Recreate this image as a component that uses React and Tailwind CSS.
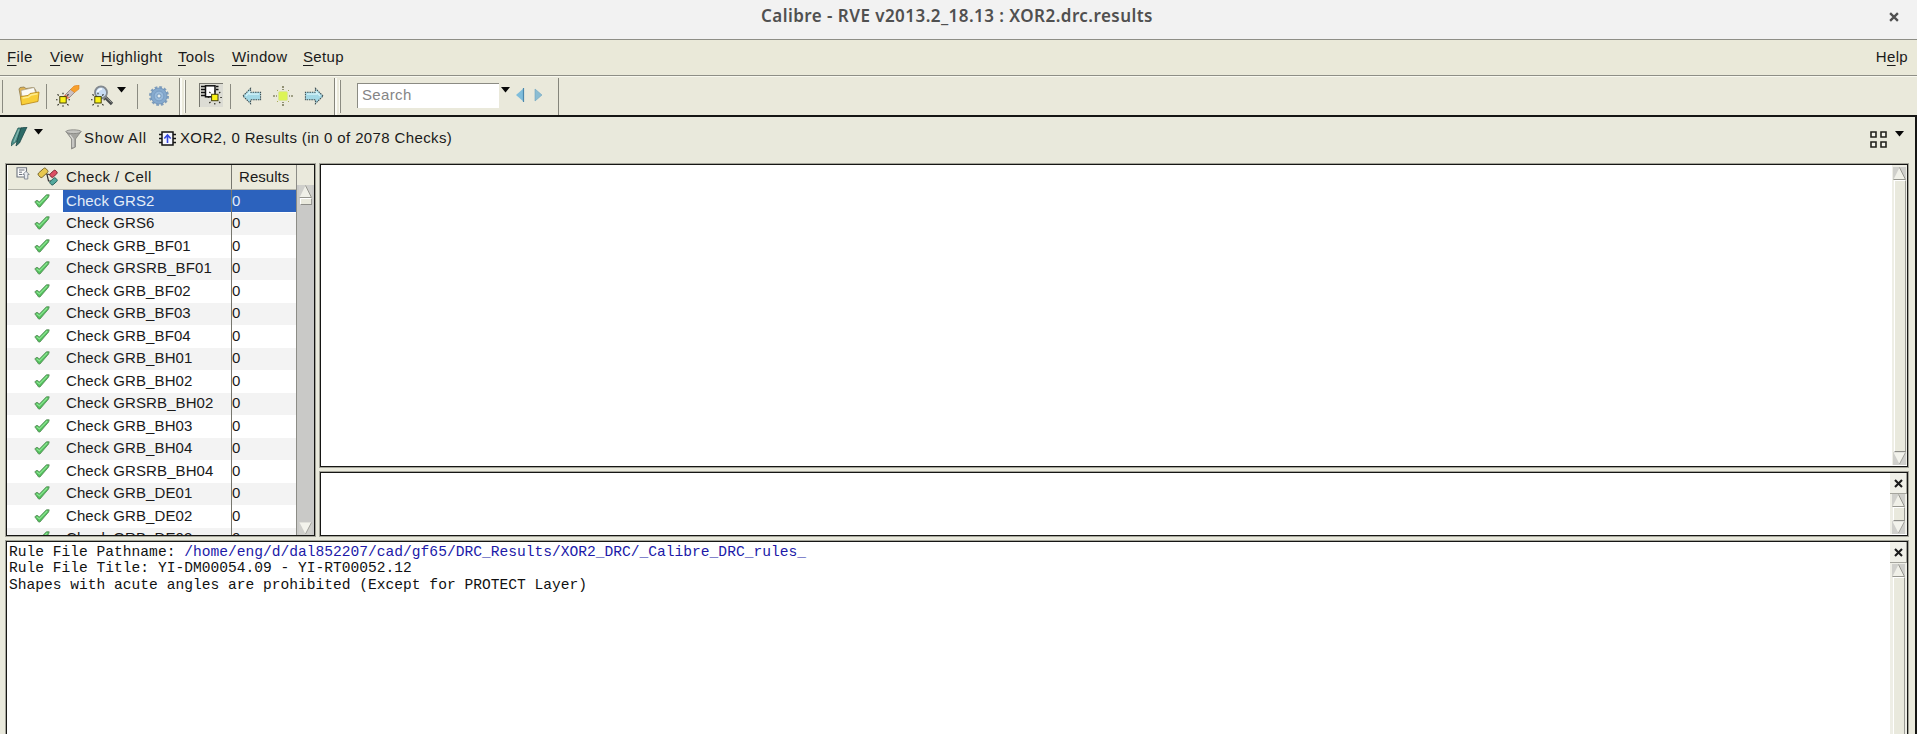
import React from "react";

const checks = [
  "GRS2", "GRS6", "GRB_BF01", "GRSRB_BF01", "GRB_BF02", "GRB_BF03", "GRB_BF04", "GRB_BH01",
  "GRB_BH02", "GRSRB_BH02", "GRB_BH03", "GRB_BH04", "GRSRB_BH04", "GRB_DE01", "GRB_DE02", "GRB_DE03",
];

const Folder = ({ className }) => (
  <svg className={className} width="22" height="20" viewBox="0 0 22 20">
    <path d="M1 3 L2 1.5 L6 1 L8 2.5 L16 1.5 L18 5 L18 14 L4 18.5 Z" fill="#dfb353" stroke="#8f7b4c" strokeWidth=".8" />
    <path d="M3 4.5 L16 1.5 L18 8 L4 11 Z" fill="#fbfaf4" stroke="#aaa48f" strokeWidth=".7" />
    <path d="M3.5 19 L2.5 10.5 L10 9.5 L12 7.5 L21 6 L20 15.5 Z" fill="#f8ce38" stroke="#b68418" strokeWidth=".8" />
    <path d="M4.5 12 L10.5 11 L13 9 L19.5 7.8" fill="none" stroke="#fdec8f" strokeWidth="1.5" />
  </svg>
);

const Glow = ({ x, y }) => (
  <g>
    <path
      d={`M${x - 7} ${y}h1.5M${x + 5.5} ${y}h1.5M${x} ${y - 7}v1.5M${x} ${y + 5.5}v1.5M${x - 5.5} ${y - 5.5}l1.2 1.2M${x + 5.5} ${y - 5.5}l-1.2 1.2M${x - 5.5} ${y + 5.5}l1.2 -1.2M${x + 5.5} ${y + 5.5}l-1.2 -1.2`}
      stroke="#26261c" strokeWidth="1.1"
    />
    <rect x={x - 3.2} y={y - 3.2} width="6.4" height="6.4" fill="#fbf316" stroke="#45430f" strokeWidth="1" />
  </g>
);

const Eraser = ({ className }) => (
  <svg className={className} width="24" height="22" viewBox="0 0 24 22">
    <path d="M9 10 L15 4 L19 7 L13 13 Z" fill="#c9bfc2" stroke="#85746f" strokeWidth=".7" />
    <path d="M14.5 4.5 L18 1 L23 0 L23 4 L18.5 7.5 Z" fill="#f7a02c" stroke="#dc7f20" strokeWidth=".6" />
    <path d="M7 11.5 L9.5 9.5 L13.5 13 L10 14.5 Z" fill="#e9755a" />
    <Glow x={7} y={14.8} />
  </svg>
);

const Magnifier = ({ className }) => (
  <svg className={className} width="24" height="22" viewBox="0 0 24 22">
    <path d="M14 12 L21 19" stroke="#46494a" strokeWidth="3.2" />
    <path d="M13.5 11 L20.5 17.5" stroke="#9b9d98" strokeWidth="1" />
    <circle cx="10" cy="7.5" r="6" fill="#c8dcf2" stroke="#83898f" strokeWidth="1.8" />
    <path d="M6.5 7 Q7.5 4 11 3.8" fill="none" stroke="#f4faff" strokeWidth="1.8" />
    <Glow x={7} y={14.8} />
  </svg>
);

const Caret = ({ className }) => (
  <svg className={className} width="9" height="6" viewBox="0 0 9 6">
    <path d="M0 0 H9 L4.5 5.5 Z" fill="#080808" />
  </svg>
);

const Gear = ({ className }) => (
  <svg className={className} width="22" height="22" viewBox="0 0 22 22">
    <circle cx="11" cy="11" r="8.8" fill="none" stroke="#7f9dbb" strokeWidth="2.4" strokeDasharray="2.7 1.91" />
    <circle cx="11" cy="11" r="8" fill="#86aace" stroke="#6f93ba" strokeWidth=".8" />
    <circle cx="11" cy="11" r="4.9" fill="#98badb" stroke="#7599c0" strokeWidth=".9" />
    <circle cx="11" cy="11" r="2" fill="#e4edf0" stroke="#6087b0" strokeWidth=".7" />
  </svg>
);

const ChipGlow = () => (
  <svg width="23" height="22" viewBox="0 0 23 22">
    <rect x="5.5" y="1.8" width="9.5" height="11" fill="#fff" stroke="#111" strokeWidth="1.5" />
    <path d="M1 2.5h4M1 5.5h4M1 8.5h4M1 11.5h4M16 2.5h2.5M16 5.5h2.5" stroke="#111" strokeWidth="1.3" fill="none" />
    <Glow x={14.8} y={13.5} />
  </svg>
);

const ArrowGlyph = ({ className, flip }) => (
  <svg className={className} width="20" height="18" viewBox="0 0 21 18">
    <g transform={flip ? "translate(21 0) scale(-1 1)" : undefined}>
      <path d="M1 9 L9 1 V5 H19.5 V13 H9 V17 Z" fill="#a4d9e6" stroke="#3b4d52" strokeWidth="1.1" strokeDasharray="1.6 .9" />
      <path d="M4 9 L8 5 V7 H18" fill="none" stroke="#d4f2f7" strokeWidth="1.4" />
    </g>
  </svg>
);

const Sun = ({ className }) => (
  <svg className={className} width="20" height="20" viewBox="0 0 20 20">
    <path d="M0 10h2M3 10h1M16 10h1M18 10h2M10 0v2M10 3v1M10 16v1M10 18v2" stroke="#55572f" strokeWidth="1.2" />
    <path d="M4 4l1 1M16 4l-1 1M4 16l1-1M16 16l-1-1" stroke="#a9ad56" strokeWidth="1" />
    <rect x="5.5" y="5.5" width="9" height="9" rx="1.5" fill="#dcf455" stroke="#dbe69b" strokeWidth="1" />
  </svg>
);

const Pen = ({ className }) => (
  <svg className={className} width="17" height="20" viewBox="0 0 17 20">
    <path d="M7 1 H11 L6 14 L0 19 L1 14 Z" fill="#4b918a" stroke="#2a5957" strokeWidth=".8" />
    <path d="M10 1 L16 0 L8.5 16 L5 19 L6 14 Z" fill="#2c6a66" stroke="#1d4747" strokeWidth=".8" />
    <path d="M8 2.5 L3 15" stroke="#8ab8b0" strokeWidth="1.1" />
  </svg>
);

const Funnel = ({ className }) => (
  <svg className={className} width="17" height="21" viewBox="0 0 17 21">
    <path d="M1 2.5 L6.5 10 V20 L10.5 18 V10 L16 2.5 Z" fill="#a4a4a0" stroke="#83837f" strokeWidth=".8" />
    <ellipse cx="8.5" cy="2.7" rx="7.6" ry="1.9" fill="#c5c5c1" stroke="#81817d" strokeWidth=".8" />
    <path d="M5 6 L8 10 V18" fill="none" stroke="#dededb" strokeWidth="1.2" />
  </svg>
);

const Chip = ({ className }) => (
  <svg className={className} width="17" height="15" viewBox="0 0 17 15">
    <rect x="3" y="1" width="11" height="13" fill="#f6f7ff" stroke="#151515" strokeWidth="1.5" />
    <path d="M0 3.5h3M0 7.5h3M0 11.5h3M14 3.5h3M14 7.5h3M14 11.5h3" stroke="#151515" strokeWidth="1.4" />
    <path d="M8.5 12 V4 M5.3 7.5 L8.5 4 L11.7 7.5" stroke="#3548e0" strokeWidth="1.6" fill="none" />
  </svg>
);

const Note = ({ className }) => (
  <svg className={className} width="14" height="13" viewBox="0 0 14 13">
    <path d="M1 .8 H10.5 V10 H1 Z" fill="#fbfbfb" stroke="#6c727d" strokeWidth="1.1" />
    <path d="M3 3h5.5M3 5.2h3M3 7.5h3" stroke="#6c727d" strokeWidth="1" />
    <path d="M8.4 12 V7.5 H6.8 L10 4.3 L13.2 7.5 H11.8 V12 Z" fill="#e7eaee" stroke="#7f8691" strokeWidth=".9" />
  </svg>
);

const Links = ({ className }) => (
  <svg className={className} width="21" height="19" viewBox="0 0 21 19">
    <path d="M9 7 L13 7.5 M10 7.5 L11.5 14 H14" stroke="#333" strokeWidth="1.2" fill="none" />
    <rect x="-5" y="-2.8" width="10" height="5.6" rx="1.6" transform="translate(6 5.8) rotate(-42)" fill="#e7c850" stroke="#75632a" strokeWidth=".9" />
    <rect x="-3.8" y="-2.2" width="7.6" height="4.4" rx="1.4" transform="translate(16.5 6.8) rotate(-42)" fill="#dc4f63" stroke="#7c2733" strokeWidth=".9" />
    <rect x="-3.8" y="-2.2" width="7.6" height="4.4" rx="1.4" transform="translate(16.5 14.4) rotate(-42)" fill="#54a99d" stroke="#245e58" strokeWidth=".9" />
  </svg>
);

const Tick = () => (
  <svg className="ml-[27px] shrink-0" width="16" height="14" viewBox="0 0 16 14">
    <path d="M.8 7.8 L3 6.2 L5.4 8 L12.4 .8 L15.2 .8 L14.6 3 L6 13 L4.6 13 Z" fill="#4fc05a" stroke="#5c8f5e" strokeWidth=".9" strokeLinejoin="round" />
    <path d="M2.6 7.8 L5.4 10 L13.2 2" stroke="#8ce392" strokeWidth="1.1" fill="none" />
  </svg>
);

const Cross = ({ size = 9 }) => (
  <svg width={size} height={size} viewBox="0 0 9 9">
    <path d="M1 1 L8 8 M8 1 L1 8" stroke="#1b1b1b" strokeWidth="2.1" />
  </svg>
);

const ScrollArrow = ({ down }) => (
  <svg className="block shrink-0" width="13" height="13" viewBox="0 0 13 13">
    <rect width="13" height="13" fill="#cfcfcb" />
    {down ? (
      <g>
        <path d="M.5 .5 H12.5 L6.5 12 Z" fill="#f3f3ec" />
        <path d="M12.5 .5 L6.5 12" stroke="#a3a39d" strokeWidth="1" />
      </g>
    ) : (
      <g>
        <path d="M6.5 .5 L12.5 12.5 H.5 Z" fill="#f0f0e8" />
        <path d="M6.5 .5 L12.5 12.5 H.5" stroke="#96968f" strokeWidth="1" fill="none" />
      </g>
    )}
  </svg>
);

const Thumb = ({ className }) => (
  <div className={`w-[12px] border-t border-l border-r border-b border-t-white border-l-white border-r-[#9b9b95] border-b-[#8d8d88] bg-[#e9e9dd] ${className}`} />
);

const Sep = ({ className }) => <div className={`h-[25px] w-px bg-[#8b8b81] ${className}`} />;
const Handle = () => <div className="ml-[3px] h-[33px] w-px bg-[#8b8b81] shadow-[-1px_0_0_#fbfbf5]" />;

const MenuItem = ({ first, rest, className }) => (
  <div className={className}>
    <span className="underline decoration-1 underline-offset-[3px]">{first}</span>
    {rest}
  </div>
);

function TitleBar() {
  return (
    <header className="flex h-[39px] shrink-0 items-start bg-[#f2f2f2]">
      <div className="ml-[761px] mt-[3px] w-[400px] whitespace-nowrap font-['Noto_Sans','Open_Sans',sans-serif] text-[17px] font-semibold leading-[25px] tracking-[0.45px] text-[#505050]">
        Calibre - RVE v2013.2_18.13 : XOR2.drc.results
      </div>
      <div className="ml-auto mr-[18px] mt-[12px] opacity-75"><Cross size={10} /></div>
    </header>
  );
}

function MenuBar() {
  return (
    <nav className="flex h-[37px] shrink-0 items-center border-y border-[#8e8e86] bg-[#eae9d9] pb-px text-[15px] tracking-[0.35px]">
      <MenuItem className="ml-[7px] w-[43px]" first="F" rest="ile" />
      <MenuItem className="w-[51px]" first="V" rest="iew" />
      <MenuItem className="w-[77px]" first="H" rest="ighlight" />
      <MenuItem className="w-[54px]" first="T" rest="ools" />
      <MenuItem className="w-[71px]" first="W" rest="indow" />
      <MenuItem first="S" rest="etup" />
      <div className="ml-auto mr-[9px]">
        H<span className="underline decoration-1 underline-offset-[3px]">e</span>lp
      </div>
    </nav>
  );
}

function ToolBar() {
  return (
    <div className="flex h-[39px] shrink-0 items-center border-t border-[#f8f8ee] bg-[#eae9db]">
      <div className="flex h-[37px] w-[180px] items-center border-r border-[#85857b]">
        <div className="ml-[2px] h-[33px] w-px bg-[#8b8b81]" />
        <Folder className="ml-[15px]" />
        <Sep className="ml-[6px]" />
        <Eraser className="ml-[9px]" />
        <Magnifier className="ml-[11px]" />
        <Caret className="mb-[13px] ml-[2px]" />
        <Sep className="ml-[11px]" />
        <Gear className="ml-[10px]" />
      </div>
      <div className="flex h-[37px] w-[155px] items-center border-l-2 border-r border-l-[#fbfbf5] border-r-[#85857b]">
        <Handle />
        <div className="mb-[2px] ml-[13px] flex h-[24px] w-[24px] items-start border-l border-t border-[#77776f] bg-[#dcdcd4]"><ChipGlow /></div>
        <Sep className="ml-[7px]" />
        <ArrowGlyph className="ml-[11px]" />
        <Sun className="ml-[11px]" />
        <ArrowGlyph className="ml-[11px]" flip />
      </div>
      <div className="flex h-[37px] w-[224px] items-center border-l-2 border-r border-l-[#fbfbf5] border-r-[#85857b]">
        <Handle />
        <div className="mb-[2px] ml-[16px] flex h-[25px] w-[142px] items-center border-l border-t border-[#8b8b83] bg-white pb-px pl-[4px] text-[15px] tracking-[0.35px] text-[#858585]">Search</div>
        <Caret className="mb-[12px] ml-[2px]" />
        <svg className="mb-[2px] ml-[6px]" width="27" height="14" viewBox="0 0 27 14">
          <path d="M8 0 V14 L0 7 Z" fill="#7fbddb" />
          <path d="M7.5 0 V14" stroke="#4b88ad" strokeWidth="1.2" />
          <path d="M19 1 V13 L26 7 Z" fill="#8bbdd3" stroke="#70a4bf" strokeWidth=".6" />
        </svg>
      </div>
    </div>
  );
}

function FilterBar() {
  return (
    <div className="flex h-[47px] shrink-0 items-start text-[15px] leading-[18px] tracking-[0.37px]">
      <Pen className="ml-[11px] mt-[10px]" />
      <Caret className="ml-[6px] mt-[12px]" />
      <Funnel className="ml-[22px] mt-[12px]" />
      <div className="ml-[2px] mt-[12px] w-[75px] tracking-[0.65px]">Show All</div>
      <Chip className="mt-[14px]" />
      <div className="ml-[4px] mt-[12px]">XOR2, 0 Results (in 0 of 2078 Checks)</div>
      <svg className="ml-auto mt-[14px]" width="17" height="17" viewBox="0 0 17 17">
        <path d="M1 1h5v5h-5zM11 1h5v5h-5zM1 11h5v5h-5zM11 11h5v5h-5z" fill="#f4f4ec" stroke="#22221d" strokeWidth="1.6" />
      </svg>
      <Caret className="ml-[8px] mr-[11px] mt-[14px]" />
    </div>
  );
}

function CheckTable() {
  return (
    <section className="flex w-[309px] shrink-0 overflow-hidden border border-[#161614] bg-white text-[15px] shadow-[0_0_0_1px_#a4a49a]">
      <div className="flex w-[289px] shrink-0 flex-col">
        <div className="ml-px flex h-[25px] shrink-0 border-b border-[#b4b4aa] bg-[#ebeadc] tracking-[0.4px]">
          <Note className="ml-[8px] mt-[2px]" />
          <Links className="ml-[7px] mt-[2px]" />
          <div className="ml-[8px] w-[165px] leading-[24px]">Check / Cell</div>
          <div className="flex-1 border-l border-[#77776f] pl-[7px] leading-[24px] tracking-[0.05px]">Results</div>
        </div>
        {checks.map((name, i) => (
          <div key={name} className={`flex h-[22.5px] shrink-0 items-center pb-px ${i % 2 ? "bg-[#f3f3f3]" : "bg-white"}`}>
            <Tick />
            <div className={`ml-[13px] flex h-[22px] w-[168px] items-center whitespace-nowrap pl-[3px] tracking-[0.1px] ${i === 0 ? "bg-[#2c62bd] text-[#e4edf8]" : ""}`}>Check {name}</div>
            <div className={`flex h-[22.5px] flex-1 items-center border-l border-[#77776f] ${i === 0 ? "bg-[#2c62bd] text-[#e4edf8]" : ""}`}>0</div>
          </div>
        ))}
      </div>
      <div className="flex flex-1 flex-col items-center border-l border-[#8c8c86] bg-[#c9c9c7]">
        <div className="h-[20px] w-full shrink-0 bg-[#eae9dc]" />
        <ScrollArrow />
        <Thumb className="h-[7px]" />
        <div className="flex-1" />
        <ScrollArrow down />
      </div>
    </section>
  );
}

function Workspace() {
  return (
    <div className="flex h-[372px] shrink-0 gap-[5px] pl-[6px] pr-[7px]">
      <CheckTable />
      <div className="flex flex-1 flex-col gap-[5px]">
        <section className="flex h-[303px] justify-end border border-[#161614] bg-white pb-px shadow-[0_0_0_1px_#a4a49a]">
          <div className="flex w-[15px] flex-col items-center bg-[#eeeee6]">
            <div className="h-[2px]" />
            <ScrollArrow />
            <Thumb className="flex-1" />
            <ScrollArrow down />
          </div>
        </section>
        <section className="flex flex-1 justify-end border border-[#161614] bg-white pb-px shadow-[0_0_0_1px_#a4a49a]">
          <div className="flex w-[17px] flex-col items-center bg-[#eeeee6]">
            <div className="flex h-[21px] w-full items-center justify-center border-b border-r border-[#a5a59d] bg-[#f0f0e8]"><Cross /></div>
            <ScrollArrow />
            <Thumb className="flex-1" />
            <ScrollArrow down />
          </div>
        </section>
      </div>
    </div>
  );
}

function RulePanel() {
  return (
    <div className="flex min-h-0 flex-1 pl-[6px] pr-[7px] pt-[5px]">
      <section className="flex min-h-0 flex-1 justify-between border border-b-0 border-[#161614] bg-white shadow-[0_0_0_1px_#a4a49a]">
        <div className="whitespace-pre pl-[2px] pt-[2px] font-['Liberation_Mono',monospace] text-[14.6px] leading-[16.3px] text-[#111]">
          <div>Rule File Pathname: <span className="text-[#2019a8]">/home/eng/d/dal852207/cad/gf65/DRC_Results/XOR2_DRC/_Calibre_DRC_rules_</span></div>
          <div>Rule File Title: YI-DM00054.09 - YI-RT00052.12</div>
          <div>Shapes with acute angles are prohibited (Except for PROTECT Layer)</div>
        </div>
        <div className="flex w-[17px] flex-col items-center bg-[#eeeee6]">
          <div className="flex h-[21px] w-full shrink-0 items-center justify-center border-b border-r border-[#a5a59d] bg-[#f0f0e8]"><Cross /></div>
          <div className="h-px shrink-0" />
          <ScrollArrow />
          <Thumb className="flex-1 border-b-0" />
        </div>
      </section>
    </div>
  );
}

export default function App() {
  return (
    <div className="flex h-[734px] w-[1917px] flex-col overflow-hidden bg-[#e9e9dc] font-['Liberation_Sans',Arial,sans-serif] text-[#1a1a1a]">
      <TitleBar />
      <MenuBar />
      <ToolBar />
      <main className="flex min-h-0 flex-1 flex-col border-r-2 border-t-2 border-[#151513]">
        <FilterBar />
        <Workspace />
        <RulePanel />
      </main>
    </div>
  );
}
